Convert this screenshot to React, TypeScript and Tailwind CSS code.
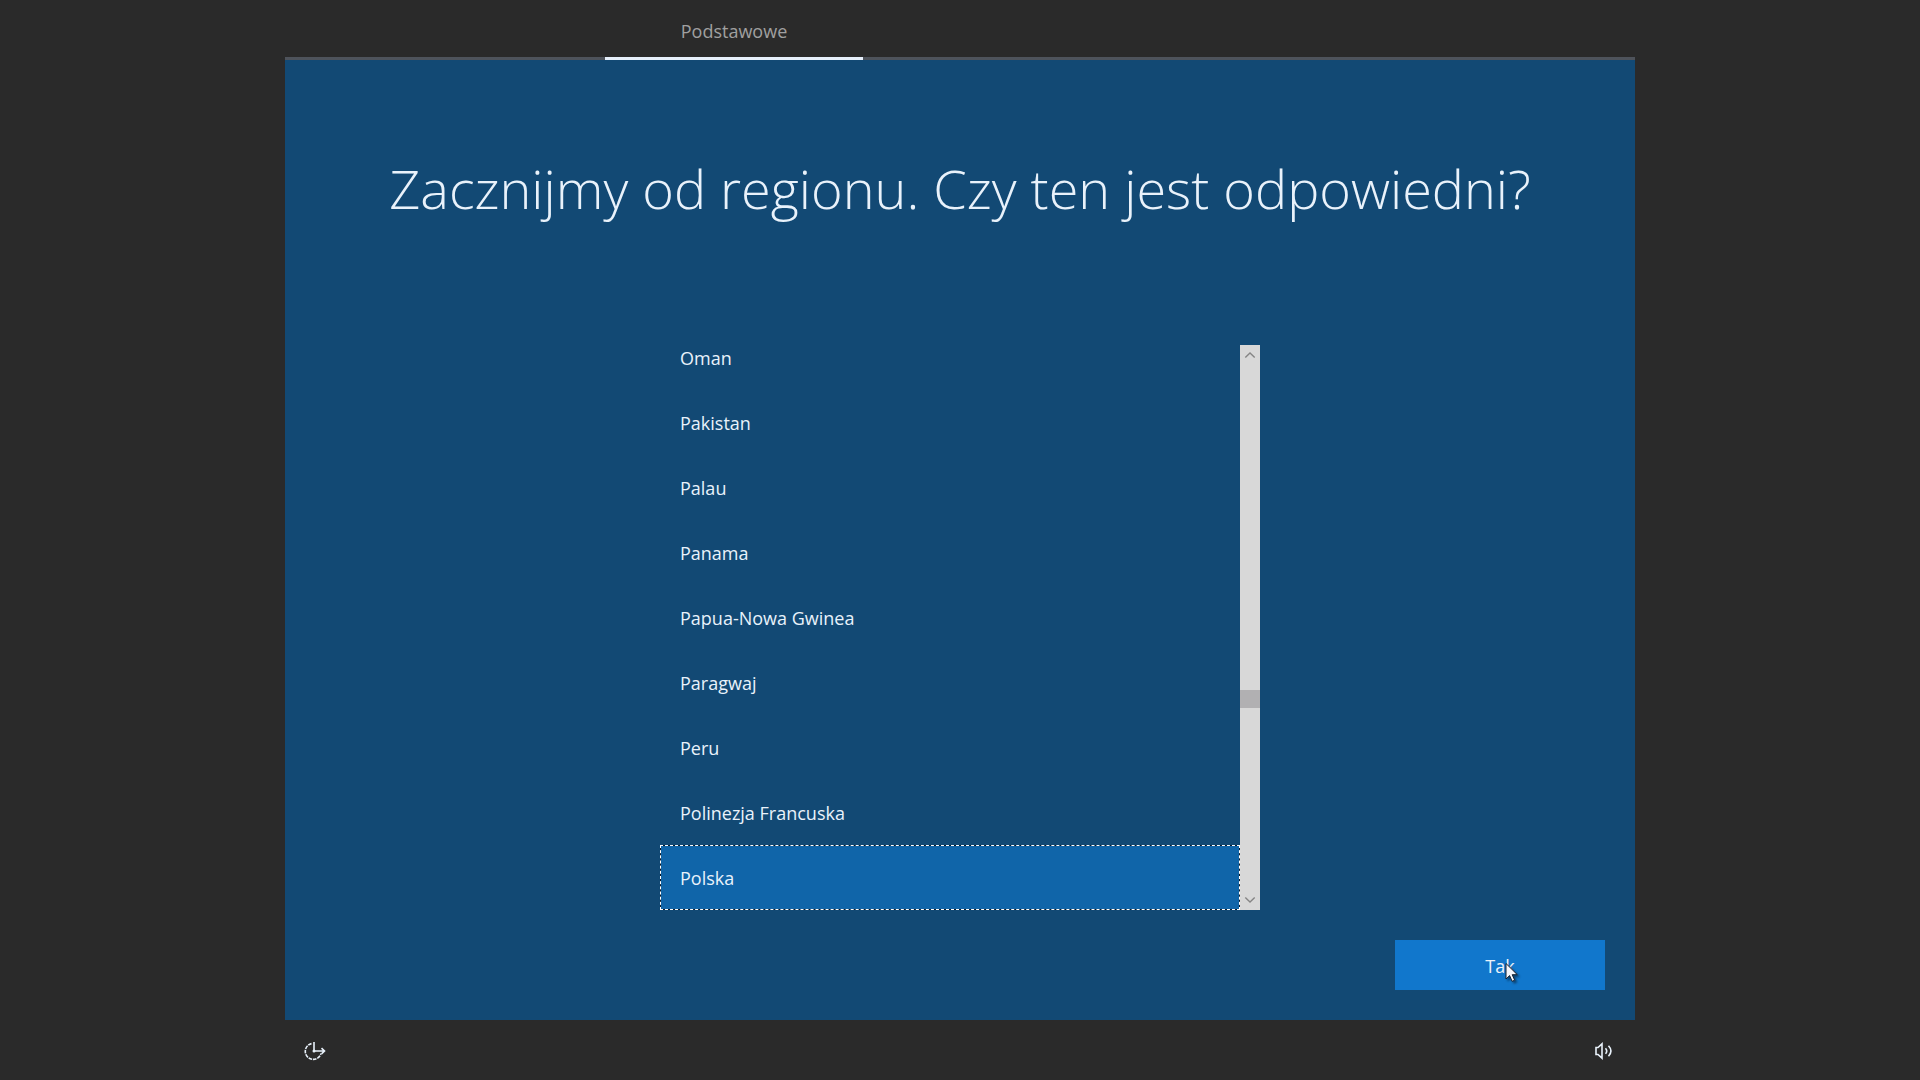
import { useState } from "react";

const regions = [
  "Oman",
  "Pakistan",
  "Palau",
  "Panama",
  "Papua-Nowa Gwinea",
  "Paragwaj",
  "Peru",
  "Polinezja Francuska",
  "Polska",
];

function Tabs() {
  return (
    <nav className="flex h-[60px] w-full border-b-[3px] border-[#4e535b]">
      <a
        href="#podstawowe"
        aria-current="step"
        className="-mb-[3px] ml-[320px] flex w-[258px] items-center justify-center border-b-[3px] border-[#e6effa] pt-1 text-lg text-[#a0a0a0]"
      >
        Podstawowe
      </a>
    </nav>
  );
}

function Scrollbar() {
  return (
    <div
      aria-hidden="true"
      className="flex w-5 shrink-0 flex-col items-center bg-[#d8d8d8] text-[#858585]"
    >
      <svg viewBox="0 0 20 20" className="size-5" fill="none" stroke="currentColor" strokeWidth="1.4">
        <path d="M5.3 12.5 10 8l4.7 4.5" />
      </svg>
      <div className="grow-[325]" />
      <div className="h-[18px] w-full bg-[#b1b0b2]" />
      <div className="grow-[182]" />
      <svg viewBox="0 0 20 20" className="size-5" fill="none" stroke="currentColor" strokeWidth="1.4">
        <path d="M5.3 7.5 10 12l4.7-4.5" />
      </svg>
    </div>
  );
}

function RegionList() {
  const [selected, setSelected] = useState("Polska");

  return (
    <div className="mx-auto flex h-[565px] w-full max-w-[600px]">
      <div
        role="radiogroup"
        aria-label="Region"
        className="flex h-full min-w-0 flex-1 flex-col justify-end overflow-hidden"
      >
        {regions.map((region) => (
          <label
            key={region}
            className="flex h-[65px] shrink-0 items-center border border-transparent px-[19px] text-lg has-checked:border-[#0b1c2c] has-checked:bg-[#1065a9] has-checked:outline-1 has-checked:-outline-offset-1 has-checked:outline-white has-checked:outline-dashed"
          >
            <input
              type="radio"
              name="region"
              value={region}
              checked={selected === region}
              onChange={() => setSelected(region)}
              className="size-0 appearance-none"
            />
            {region}
          </label>
        ))}
      </div>
      <Scrollbar />
    </div>
  );
}

function Cursor() {
  return (
    <svg
      viewBox="0 0 14 21"
      aria-hidden="true"
      className="pointer-events-none absolute top-[22px] left-[110px] h-[21px] w-[14px] drop-shadow-[2px_2px_1px_rgba(0,0,0,0.45)]"
    >
      <path
        d="M1 1.5v15.5l3.6-3.4 2.5 5.7 2.6-1.1-2.5-5.5h5.1z"
        fill="#f4f5fa"
        stroke="#15202e"
        strokeWidth="1"
      />
    </svg>
  );
}

function AccessIcon() {
  return (
    <svg viewBox="0 0 22 20" className="h-5 w-[22px]" fill="none" stroke="currentColor" strokeWidth="1.6">
      <path d="M7.5 2.6A8 8 0 1 0 17 12.5" strokeDasharray="3.6 0.9" />
      <path d="M10 1v9" />
      <path d="M10 10h10.5M17.5 7.2l3 2.8-3 2.8" />
      <circle cx="10" cy="10" r="1.5" fill="currentColor" stroke="none" />
    </svg>
  );
}

function VolumeIcon() {
  return (
    <svg viewBox="0 0 20 18" className="h-[18px] w-5" fill="none" stroke="currentColor" strokeWidth="1.6">
      <path d="M2 5.5h2L8 1.8v14.4l-4-3.7H2z" />
      <path d="M11.5 6.2c1.5 1.7 1.5 3.9 0 5.6" />
      <path d="M14.5 3.8c3 3.2 3 7.2 0 10.4" />
    </svg>
  );
}

export default function App() {
  return (
    <div className="flex min-h-screen flex-col bg-[#2a2a2a] font-['Open_Sans','Noto_Sans',sans-serif] text-[#e9f2fb]">
      <div className="mx-auto flex w-full max-w-[1350px] flex-1 flex-col">
        <Tabs />

        <main className="flex flex-1 flex-col bg-[#124974] px-[30px] pb-[30px]">
          <h1 className="pt-[90px] text-center text-[54px] leading-[76px] font-light">
            Zacznijmy od regionu. Czy ten jest odpowiedni?
          </h1>

          <div className="mt-auto">
            <RegionList />
          </div>

          <div className="relative mt-[30px] w-[210px] self-end">
            <button type="button" className="h-[50px] w-full bg-[#1177cc] pt-0.5 text-lg">
              Tak
            </button>
            <Cursor />
          </div>
        </main>

        <footer className="flex h-[60px] items-center justify-between pt-0.5 pr-[21px] pl-[19px]">
          <button type="button" aria-label="Ułatwienia dostępu">
            <AccessIcon />
          </button>
          <button type="button" aria-label="Głośność">
            <VolumeIcon />
          </button>
        </footer>
      </div>
    </div>
  );
}
